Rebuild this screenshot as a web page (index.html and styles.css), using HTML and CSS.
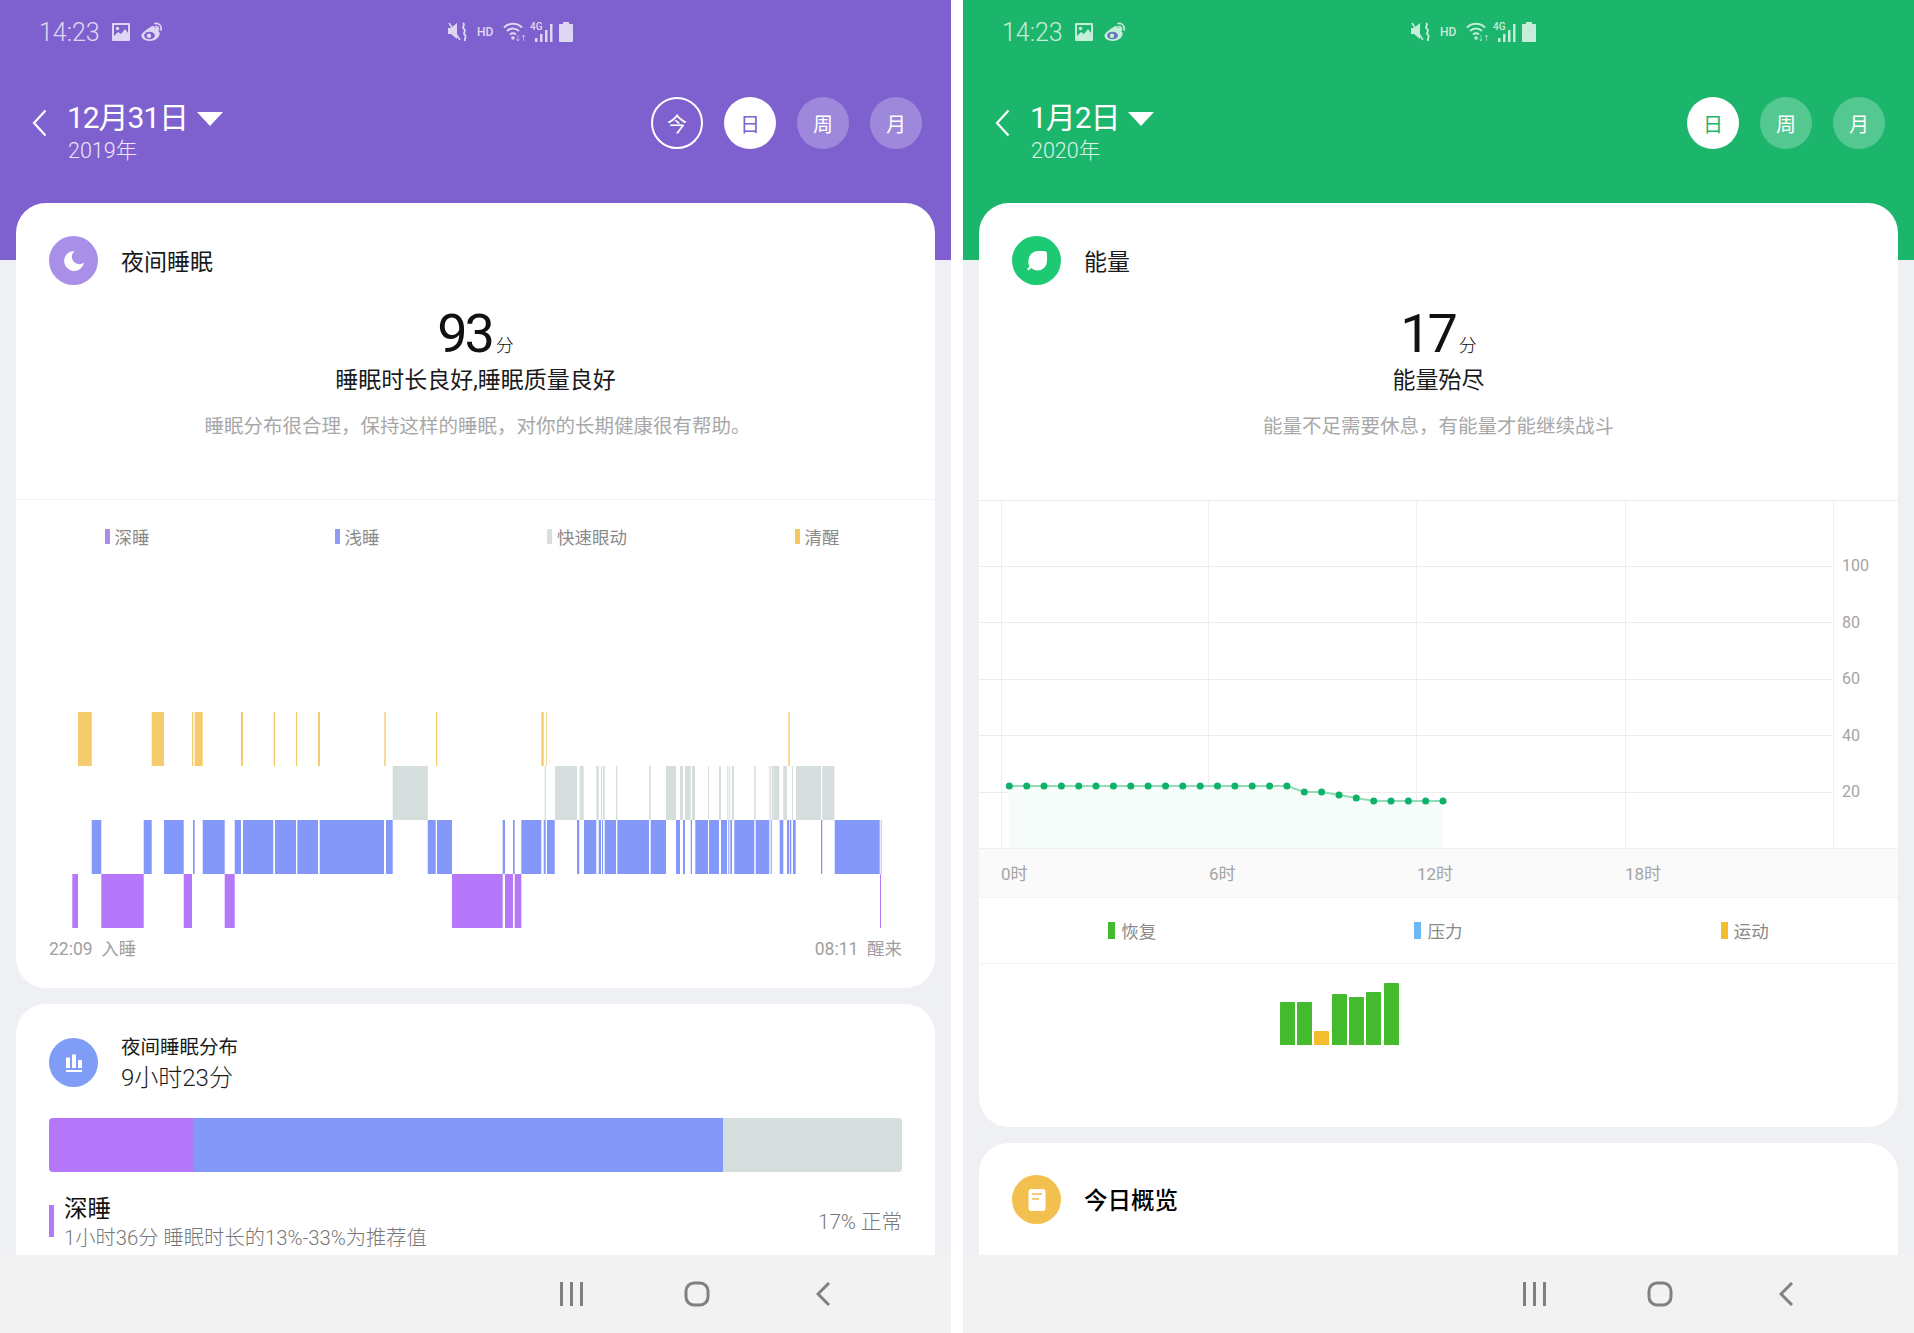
FILE: index.html
```html
<!DOCTYPE html>
<html lang="zh-CN">
<head>
  <meta charset="UTF-8" />
  <title>睡眠与能量</title>
  <link rel="stylesheet" href="styles.css">
</head>
<body>
  <svg class="defs" width="0" height="0">
    <symbol id="st-pic" viewBox="0 0 18 18"><path d="M1 0h16a1 1 0 0 1 1 1v16a1 1 0 0 1-1 1H1a1 1 0 0 1-1-1V1a1 1 0 0 1 1-1zM2 2v11l4-4 3 2 4-5 3 4V2z" fill-rule="evenodd"/><circle cx="5.500" cy="5.500" r="1.700"/></symbol>
    <symbol id="st-weibo" viewBox="0 0 22 20"><path d="M8 6c3-2.500 5-2.500 5.500-1.200.3.800 0 1.600 0 1.600 2.500-.8 4-.2 4 1.300 0 .7-.6 1.300-.6 1.300 1.200.4 1.800 1.300 1.800 2.500C18.700 15.500 14 19 8.500 19 4 19 .5 17 .5 13.600.5 11.500 3.500 9 8 6z"/><ellipse cx="8.500" cy="13.500" rx="5.300" ry="3.800" class="st-hole"/><circle cx="8" cy="13.800" r="2.200"/><path d="M14 1.500c3.500-.8 7 2 6 6.500M14.500 4.800c1.800-.4 3.300 1 2.800 3" fill="none" stroke="#fff" stroke-width="1.700" stroke-linecap="round"/></symbol>
    <symbol id="st-mute" viewBox="0 0 19 20"><path d="M0 6h3l6-5v16L3 12H0z"/><path d="M1 1l11 17" stroke="#fff" stroke-width="1.500"/><path d="M15 1c3 2-2 4 1 6 3 2-2 4 1 6 2 1.500-1 3 0 6" fill="none" stroke="#fff" stroke-width="1.800"/></symbol>
    <symbol id="st-wifi" viewBox="0 0 23 20"><path d="M1 5.500c5-5 13-5 18 0M4 9c3.500-3.200 8.500-3.200 12 0M7 12.500c2-1.600 4-1.600 6 0" fill="none" stroke="#fff" stroke-width="2"/><circle cx="10" cy="16" r="1.800"/><path d="M15 13v6M13.500 17l1.500 2 1.500-2M20.500 19v-6M19 15l1.500-2 1.500 2" fill="none" stroke="#fff" stroke-width="1" opacity=".6"/></symbol>
    <symbol id="st-signal" viewBox="0 0 18 18"><path d="M0 14h2.500v4H0zM5 10h2.500v8H5zM10 6h2.500v12H10zM15 0h2.500v18H15z"/></symbol>
    <symbol id="st-battery" viewBox="0 0 14 20"><path d="M4 0h6v2h3a1 1 0 0 1 1 1v16a1 1 0 0 1-1 1H1a1 1 0 0 1-1-1V3a1 1 0 0 1 1-1h3z"/></symbol>
    <symbol id="back" viewBox="0 0 15 28"><path d="M13.500 1.500L2 14l11.500 12.500" fill="none" stroke="#fff" stroke-width="2.200"/></symbol>
  </svg>

  <main class="page">
    <!-- sleep -->
    <section class="phone phone-sleep">
      <header class="header">
        <div class="status">
          <div class="status-left">
            <span class="clock">14:23</span>
            <svg class="st st-pic"><use href="#st-pic"/></svg>
            <svg class="st st-weibo"><use href="#st-weibo"/></svg>
          </div>
          <div class="status-mid">
            <svg class="st st-mute"><use href="#st-mute"/></svg>
            <span class="st-hd">HD</span>
            <svg class="st st-wifi"><use href="#st-wifi"/></svg>
            <span class="st-net"><span class="st-4g">4G</span><svg class="st st-signal"><use href="#st-signal"/></svg></span>
            <svg class="st st-battery"><use href="#st-battery"/></svg>
          </div>
        </div>
        <div class="toolbar">
          <svg class="back"><use href="#back"/></svg>
          <div class="date">
            <div class="date-main">12月31日<span class="caret"></span></div>
            <div class="date-year">2019年</div>
          </div>
          <div class="tabs">
            <span class="tab tab-today">今</span>
            <span class="tab tab-on">日</span>
            <span class="tab">周</span>
            <span class="tab">月</span>
          </div>
        </div>
      </header>

      <div class="content">
        <article class="card card-main">
          <div class="card-head">
            <span class="badge badge-moon">
              <svg viewBox="0 0 20 20" width="20" height="20"><path d="M10.500 0a10 10 0 1 0 9.500 11.500 6.500 6.500 0 0 1-9.500-11.500z" fill="#fff"/></svg>
            </span>
            <h2 class="card-title">夜间睡眠</h2>
          </div>
          <div class="score">
            <div class="score-num">93<span class="score-unit">分</span></div>
            <div class="score-head">睡眠时长良好,睡眠质量良好</div>
            <p class="score-desc">睡眠分布很合理，保持这样的睡眠，对你的长期健康很有帮助。</p>
          </div>
          <div class="legend legend-4">
            <span class="legend-item"><i class="mark m-deep"></i>深睡</span>
            <span class="legend-item"><i class="mark m-light"></i>浅睡</span>
            <span class="legend-item"><i class="mark m-rem"></i>快速眼动</span>
            <span class="legend-item"><i class="mark m-awake"></i>清醒</span>
          </div>
          <svg class="sleep-chart" viewBox="16 0 919 216" width="919" height="216">
            <g class="row-awake">
              <rect x="78" width="13.700"/><rect x="151.700" width="12.300"/><rect x="192" width="1.200"/><rect x="194.700" width="8"/><rect x="241" width="2"/><rect x="273.700" width="1.400"/><rect x="296" width="1.200"/><rect x="318" width="2"/><rect x="384" width="2" opacity=".7"/><rect x="436" width="1.200"/><rect x="541.300" width="2.400"/><rect x="546" width="1" opacity=".7"/><rect x="788.300" width="1.400"/>
            </g>
            <g class="row-rem">
              <rect x="392.700" width="35"/><rect x="544.700" width="1.300"/><rect x="555" width="22"/><rect x="579.700" width="4"/><rect x="596.300" width="2.400"/><rect x="601" width="1"/><rect x="603" width="1.700"/><rect x="616" width="1.300"/><rect x="649" width="1.700"/><rect x="666" width="10"/><rect x="680" width="3"/><rect x="685" width="5.700"/><rect x="692" width="3"/><rect x="708" width="1"/><rect x="719" width="2"/><rect x="727.300" width="1"/><rect x="729.300" width="1"/><rect x="732" width="2"/><rect x="754.300" width="1.400"/><rect x="769.300" width="1.400"/><rect x="771.700" width="2"/><rect x="774" width="5.300"/><rect x="783.300" width="3.700"/><rect x="792" width="1"/><rect x="796" width="25"/><rect x="822.300" width="12"/>
            </g>
            <g class="row-light">
              <rect x="91.700" width="9.600"/><rect x="143.700" width="8"/><rect x="164" width="19.700"/><rect x="193" width="1.700"/><rect x="202.700" width="22"/><rect x="234.700" width="6.300"/><rect x="243" width="30.300"/><rect x="275" width="21"/><rect x="297.300" width="20.700"/><rect x="319.700" width="64.300"/><rect x="386" width="6.700"/><rect x="427.700" width="8"/><rect x="437" width="15"/><rect x="502.700" width="2.300"/><rect x="513" width="1.700"/><rect x="521.300" width="20"/><rect x="543.700" width="2"/><rect x="547" width="7.700"/><rect x="577" width="2.300"/><rect x="584" width="12.300"/><rect x="598.700" width="2.300"/><rect x="602" width="1"/><rect x="604.700" width="11.300"/><rect x="617.300" width="31.700"/><rect x="650.700" width="15.300"/><rect x="676" width="4"/><rect x="683" width="2"/><rect x="690.700" width="1.300"/><rect x="695.300" width="12.700"/><rect x="709" width="10"/><rect x="721" width="6"/><rect x="728.300" width="1"/><rect x="730.300" width="1.700"/><rect x="734.300" width="20"/><rect x="755.700" width="13.600"/><rect x="770.700" width="1"/><rect x="779.700" width="3.600"/><rect x="787" width="2"/><rect x="789.700" width="1.600"/><rect x="793" width="2.700"/><rect x="821" width="1.300"/><rect x="834.700" width="45"/><rect x="880.700" width="1" opacity=".6"/>
            </g>
            <g class="row-deep">
              <rect x="72.300" width="5.700"/><rect x="101.300" width="42.400"/><rect x="183.700" width="8.300"/><rect x="224.700" width="10"/><rect x="452" width="50.700"/><rect x="505" width="8"/><rect x="514.700" width="6.600"/><rect x="880" width="1"/>
            </g>
          </svg>
          <div class="times"><span>22:09&nbsp;&nbsp;入睡</span><span>08:11&nbsp;&nbsp;醒来</span></div>
        </article>

        <article class="card card-rest">
          <div class="card-head card-head-two">
            <span class="badge badge-bars">
              <svg viewBox="0 0 20 20" width="20" height="20"><path d="M2 4.500h4V15H2zM8 1.500h4V15H8zM14 7h4v8h-4zM2 17h16v2H2z" fill="#fff"/></svg>
            </span>
            <div class="head-text">
              <div class="sub-title">夜间睡眠分布</div>
              <div class="big-title">9小时23分</div>
            </div>
          </div>
          <div class="stack">
            <span class="stack-deep"></span>
            <span class="stack-light"></span>
            <span class="stack-rem"></span>
          </div>
          <div class="stage">
            <i class="stage-mark"></i>
            <div class="stage-text">
              <div class="stage-name">深睡</div>
              <div class="stage-note">1小时36分 睡眠时长的13%-33%为推荐值</div>
            </div>
            <div class="stage-pct">17% 正常</div>
          </div>
        </article>
      </div>

      <nav class="navbar">
        <svg class="nav-menu" viewBox="0 0 23 24" width="23" height="24"><path d="M1.500 0v24M11.500 0v24M21.500 0v24"/></svg>
        <svg class="nav-home" viewBox="0 0 26 26" width="26" height="26"><rect x="2" y="2" width="22" height="22" rx="8"/></svg>
        <svg class="nav-back" viewBox="0 0 14 24" width="14" height="24"><path d="M13 1L2 12l11 11"/></svg>
      </nav>
    </section>

    <!-- energy -->
    <section class="phone phone-energy">
      <header class="header">
        <div class="status">
          <div class="status-left">
            <span class="clock">14:23</span>
            <svg class="st st-pic"><use href="#st-pic"/></svg>
            <svg class="st st-weibo"><use href="#st-weibo"/></svg>
          </div>
          <div class="status-mid">
            <svg class="st st-mute"><use href="#st-mute"/></svg>
            <span class="st-hd">HD</span>
            <svg class="st st-wifi"><use href="#st-wifi"/></svg>
            <span class="st-net"><span class="st-4g">4G</span><svg class="st st-signal"><use href="#st-signal"/></svg></span>
            <svg class="st st-battery"><use href="#st-battery"/></svg>
          </div>
        </div>
        <div class="toolbar">
          <svg class="back"><use href="#back"/></svg>
          <div class="date">
            <div class="date-main">1月2日<span class="caret"></span></div>
            <div class="date-year">2020年</div>
          </div>
          <div class="tabs">
            <span class="tab tab-on">日</span>
            <span class="tab">周</span>
            <span class="tab">月</span>
          </div>
        </div>
      </header>

      <div class="content">
        <article class="card card-energy">
          <div class="card-head">
            <span class="badge badge-leaf">
              <svg viewBox="0 0 24 24" width="24" height="24"><path d="M13 2h6a3 3 0 0 1 3 3v7a9.500 9.500 0 0 1-9.500 9.500c-2.500 0-4.700-.9-6.300-2.400L3.500 21.500 2 20l2.400-2.400A9.500 9.500 0 0 1 3.500 11.500 9.500 9.500 0 0 1 13 2z" fill="#fff"/></svg>
            </span>
            <h2 class="card-title">能量</h2>
          </div>
          <div class="score">
            <div class="score-num">17<span class="score-unit">分</span></div>
            <div class="score-head">能量殆尽</div>
            <p class="score-desc">能量不足需要休息，有能量才能继续战斗</p>
          </div>
          <svg class="energy-chart" viewBox="979 500 919 348" width="919" height="348">
            <path class="grid-h" d="M979 500.500H1898M979 566.500H1833M979 622.500H1833M979 679.500H1833M979 735.500H1833M979 792.500H1833"/>
            <path class="grid-v" d="M1001.500 501V848M1208.500 501V848M1416.500 501V848M1625.500 501V848M1833.500 501V848"/>
            <path class="area" d="M1009 786H1287L1304 792H1322L1339 795L1356 798L1374 801H1443V848H1009z"/>
            <path class="trend" d="M1009 786H1287L1304 792H1322L1339 795L1356 798L1374 801H1443"/>
            <g class="dots">
              <circle cx="1009.300" cy="786"/><circle cx="1026.700" cy="786"/><circle cx="1044" cy="786"/><circle cx="1061.400" cy="786"/><circle cx="1078.700" cy="786"/><circle cx="1096" cy="786"/><circle cx="1113.400" cy="786"/><circle cx="1130.800" cy="786"/><circle cx="1148.100" cy="786"/><circle cx="1165.500" cy="786"/><circle cx="1182.800" cy="786"/><circle cx="1200.200" cy="786"/><circle cx="1217.500" cy="786"/><circle cx="1234.900" cy="786"/><circle cx="1252.200" cy="786"/><circle cx="1269.600" cy="786"/><circle cx="1286.900" cy="786"/><circle cx="1304.300" cy="792"/><circle cx="1321.600" cy="792"/><circle cx="1339" cy="795"/><circle cx="1356.300" cy="798"/><circle cx="1373.700" cy="801"/><circle cx="1391" cy="801"/><circle cx="1408.400" cy="801"/><circle cx="1425.700" cy="801"/><circle cx="1443" cy="801"/>
            </g>
            <g class="y-labels">
              <text x="1842" y="571">100</text><text x="1842" y="628">80</text><text x="1842" y="684">60</text><text x="1842" y="741">40</text><text x="1842" y="797">20</text>
            </g>
          </svg>
          <div class="x-axis"><span>0时</span><span>6时</span><span>12时</span><span>18时</span></div>
          <div class="legend legend-3">
            <span class="legend-item"><i class="mark m-rest"></i>恢复</span>
            <span class="legend-item"><i class="mark m-stress"></i>压力</span>
            <span class="legend-item"><i class="mark m-sport"></i>运动</span>
          </div>
          <div class="bars">
            <i class="bar" style="height:43px"></i>
            <i class="bar" style="height:43px"></i>
            <i class="bar bar-sport" style="height:14px"></i>
            <i class="bar" style="height:51px"></i>
            <i class="bar" style="height:48px"></i>
            <i class="bar" style="height:53px"></i>
            <i class="bar" style="height:62px"></i>
          </div>
        </article>

        <article class="card card-rest">
          <div class="card-head card-head-today">
            <span class="badge badge-book">
              <svg viewBox="0 0 24 24" width="24" height="24"><rect x="3.500" y="1" width="17" height="22" rx="3" fill="#fff"/><path d="M7 6h10M7 11h7" stroke="#f3bf4e" stroke-width="1.600"/></svg>
            </span>
            <h2 class="card-title card-title-today">今日概览</h2>
          </div>
        </article>
      </div>

      <nav class="navbar">
        <svg class="nav-menu" viewBox="0 0 23 24" width="23" height="24"><path d="M1.500 0v24M11.500 0v24M21.500 0v24"/></svg>
        <svg class="nav-home" viewBox="0 0 26 26" width="26" height="26"><rect x="2" y="2" width="22" height="22" rx="8"/></svg>
        <svg class="nav-back" viewBox="0 0 14 24" width="14" height="24"><path d="M13 1L2 12l11 11"/></svg>
      </nav>
    </section>
  </main>
</body>
</html>
```

FILE: styles.css
```css
* {
  box-sizing: border-box;
}
body {
  margin: 0;
  background: #fff;
  font-family: Roboto, "Noto Sans CJK SC", sans-serif;
  font-weight: 300;
  color: #1a1a1a;
}
.defs {
  position: absolute;
}
.page {
  display: flex;
  gap: 12px;
  width: 1914px;
  height: 1333px;
}
.phone {
  display: flex;
  flex-direction: column;
  width: 951px;
  height: 1333px;
  background: #eff0f4;
  overflow: hidden;
}

/* header */
.header {
  height: 260px;
  flex: none;
  color: #fff;
}
.phone-sleep .header {
  background: #7e61cf;
}
.phone-energy .header {
  background: #1cb56c;
}
.status {
  position: relative;
  height: 64px;
  display: flex;
  align-items: center;
  padding-left: 39px;
}
.status-left {
  display: flex;
  align-items: center;
  opacity: .75;
}
.clock {
  font-size: 25px;
  width: 73px;
}
.st {
  display: block;
  fill: #fff;
}
.st-hole {
  fill: #7e61cf;
}
.phone-energy .st-hole {
  fill: #1cb56c;
}
.st-pic {
  width: 18px;
  height: 18px;
  margin-right: 11px;
}
.st-weibo {
  width: 22px;
  height: 20px;
}
.status-mid {
  position: absolute;
  left: 448px;
  top: 22px;
  display: flex;
  align-items: center;
  height: 20px;
  opacity: .75;
}
.st-mute {
  width: 19px;
  height: 20px;
  margin-right: 10px;
}
.st-hd {
  font-size: 12px;
  font-weight: 500;
  width: 26px;
}
.st-wifi {
  width: 23px;
  height: 20px;
  margin-right: 4px;
}
.st-net {
  position: relative;
  width: 23px;
  height: 20px;
  margin-right: 6px;
}
.st-4g {
  position: absolute;
  left: 0;
  top: 0;
  font-size: 10px;
  line-height: 10px;
  font-weight: 500;
}
.st-signal {
  position: absolute;
  right: 0;
  bottom: 0;
  width: 18px;
  height: 18px;
}
.st-battery {
  width: 14px;
  height: 20px;
}
.toolbar {
  display: flex;
  margin-top: 33px;
  padding: 0 29px 0 32px;
}
.back {
  width: 15px;
  height: 28px;
  margin: 12px 20px 0 0;
}
.date-main {
  display: flex;
  align-items: center;
  height: 40px;
  margin-top: 1px;
  font-size: 30px;
  line-height: 40px;
  font-weight: 400;
  letter-spacing: -1.100px;
}
.caret {
  width: 0;
  height: 0;
  margin: 2px 0 0 9px;
  border-left: 13px solid transparent;
  border-right: 13px solid transparent;
  border-top: 14px solid #fff;
}
.date-year {
  margin: -1px 0 0 1px;
  font-size: 21.500px;
  line-height: 28px;
  opacity: .85;
}
.tabs {
  display: flex;
  gap: 21px;
  margin-left: auto;
}
.tab {
  display: flex;
  align-items: center;
  justify-content: center;
  width: 52px;
  height: 52px;
  border-radius: 50%;
  background: rgba(255, 255, 255, .25);
  font-size: 20px;
  font-weight: 400;
}
.tab-today {
  background: none;
  border: 2px solid #fff;
}
.tab-on {
  background: #fff;
}
.phone-sleep .tab-on {
  color: #7e61cf;
}
.phone-energy .tab-on {
  color: #1cb56c;
}

/* cards */
.content {
  flex: 1;
  min-height: 0;
  margin-top: -57px;
  padding: 0 16px;
  overflow: hidden;
}
.card {
  background: #fff;
  border-radius: 30px;
  margin-bottom: 16px;
  overflow: hidden;
}
.card-main {
  height: 785px;
}
.card-energy {
  height: 924px;
}
.card-rest {
  height: 300px;
}
.card-head {
  display: flex;
  align-items: center;
  gap: 23px;
  padding: 33px 33px 0;
}
.card-head .card-title {
  position: relative;
  top: -1px;
}
.badge {
  display: flex;
  align-items: center;
  justify-content: center;
  flex: none;
  width: 49px;
  height: 49px;
  border-radius: 50%;
}
.badge-moon {
  background: #a98fe8;
}
.badge-bars {
  background: #7f9cf7;
}
.badge-leaf {
  background: #1ec974;
}
.badge-book {
  background: #f3bf4e;
}
.card-title {
  margin: 0;
  font-size: 23px;
  font-weight: 400;
}
.score {
  height: 215px;
  padding-top: 21px;
  border-bottom: 1px solid #f5f5f5;
  text-align: center;
}
.score-num {
  height: 56px;
  font-size: 54px;
  line-height: 56px;
  font-weight: 400;
  letter-spacing: -3px;
  color: #111;
}
.score-unit {
  margin-left: 4px;
  font-size: 18px;
  font-weight: 300;
  letter-spacing: 0;
}
.score-head {
  margin-top: 4px;
  font-size: 23px;
  line-height: 30px;
  font-weight: 400;
}
.score-desc {
  margin: 16px 0 0;
  font-size: 19.500px;
  line-height: 30px;
  font-weight: 400;
  color: #a8a8a8;
}
.card-main .score-desc {
  padding-left: 4px;
}

/* legends */
.legend {
  display: grid;
  font-size: 17.500px;
  font-weight: 400;
  color: #8a8a8a;
}
.legend-4 {
  grid-template-columns: repeat(4, 230px);
  height: 76px;
  padding-top: 21px;
  margin-left: -4px;
}
.legend-3 {
  grid-template-columns: repeat(3, 1fr);
  align-items: center;
  height: 66px;
  border-bottom: 1px solid #f2f2f2;
}
.legend-item {
  display: flex;
  align-items: center;
  justify-content: center;
  height: 30px;
}
.mark {
  width: 5px;
  height: 15px;
  margin-right: 5px;
}
.legend-3 .mark {
  width: 7px;
  height: 17px;
  margin-right: 6px;
}
.m-deep {
  background: #a98fe8;
}
.m-light {
  background: #8f9bf5;
}
.m-rem {
  background: #d9dddd;
}
.m-awake {
  background: #f5c95f;
}
.m-rest {
  background: #44bb2e;
}
.m-stress {
  background: #6cb9f7;
}
.m-sport {
  background: #f3bd2e;
}

/* sleep chart */
.sleep-chart {
  display: block;
  margin-top: 136px;
}
.sleep-chart rect {
  height: 54px;
}
.row-awake {
  fill: #f5cb6b;
}
.row-rem {
  fill: #d5dddd;
}
.row-rem rect {
  y: 54px;
}
.row-light {
  fill: #8498f9;
}
.row-light rect {
  y: 108px;
}
.row-deep {
  fill: #b678fb;
}
.row-deep rect {
  y: 162px;
}
.times {
  display: flex;
  justify-content: space-between;
  padding: 7px 33px 0;
  font-size: 17.500px;
  line-height: 28px;
  font-weight: 400;
  color: #a0a0a0;
}

/* energy chart */
.card-energy .score {
  border-bottom: 0;
}
.energy-chart {
  display: block;
}
.energy-chart path {
  fill: none;
}
.energy-chart .grid-h {
  stroke: #ececec;
}
.energy-chart .grid-v {
  stroke: #efefef;
}
.energy-chart .area {
  fill: #f6fcfa;
}
.energy-chart .trend {
  stroke: #8fdcb7;
  stroke-width: 2;
}
.dots circle {
  r: 3.500px;
  fill: #0fb268;
}
.y-labels text {
  font-size: 16px;
  font-weight: 400;
  fill: #a4a4a4;
}
.x-axis {
  display: grid;
  grid-template-columns: repeat(4, 208px);
  align-items: center;
  height: 50px;
  padding: 0 0 2px 22px;
  background: #fafafa;
  border-top: 1px solid #efefef;
  border-bottom: 1px solid #f2f2f2;
  font-size: 17px;
  font-weight: 400;
  color: #a4a4a4;
}
.bars {
  display: flex;
  align-items: flex-end;
  gap: 2.350px;
  height: 81px;
  padding-left: 300.500px;
}
.bar {
  width: 15px;
  background: #44bb2e;
  border-radius: 1px 1px 0 0;
}
.bar-sport {
  background: #f3bd2e;
}

/* lower card */
.card-head-two {
  padding-top: 27px;
}
.head-text {
  padding-top: 3px;
}
.sub-title {
  font-size: 19.500px;
  line-height: 28px;
  font-weight: 400;
}
.big-title {
  font-size: 24px;
  line-height: 32px;
}
.stack {
  display: flex;
  height: 54px;
  margin: 24px 33px 0;
  border-radius: 4px;
  overflow: hidden;
}
.stack-deep {
  width: 145px;
  background: #b678fb;
}
.stack-light {
  width: 529px;
  background: #8498f9;
}
.stack-rem {
  flex: 1;
  background: #d5dddd;
}
.stage {
  display: flex;
  align-items: center;
  margin: 22px 33px 0;
}
.stage-mark {
  width: 5px;
  height: 32px;
  margin: 0 10px 4px 0;
  background: #b678fb;
}
.stage-name {
  font-size: 23.500px;
  line-height: 30px;
  font-weight: 400;
  color: #111;
}
.stage-note {
  font-size: 20.300px;
  line-height: 28px;
  color: #777;
}
.stage-pct {
  margin: 0 0 7px auto;
  font-size: 20.500px;
  color: #777;
}
.card-head-today {
  padding-top: 32px;
}
.card-title-today {
  font-size: 23.500px;
  font-weight: 500;
  color: #000;
}

/* nav bar */
.navbar {
  display: flex;
  align-items: center;
  flex: none;
  height: 78px;
  padding: 0 0 0 560px;
  background: #f2f2f2;
}
.navbar svg {
  fill: none;
  stroke: #808080;
  stroke-width: 3;
}
.nav-home {
  margin-left: 101px;
}
.nav-back {
  margin-left: 106px;
}
```
